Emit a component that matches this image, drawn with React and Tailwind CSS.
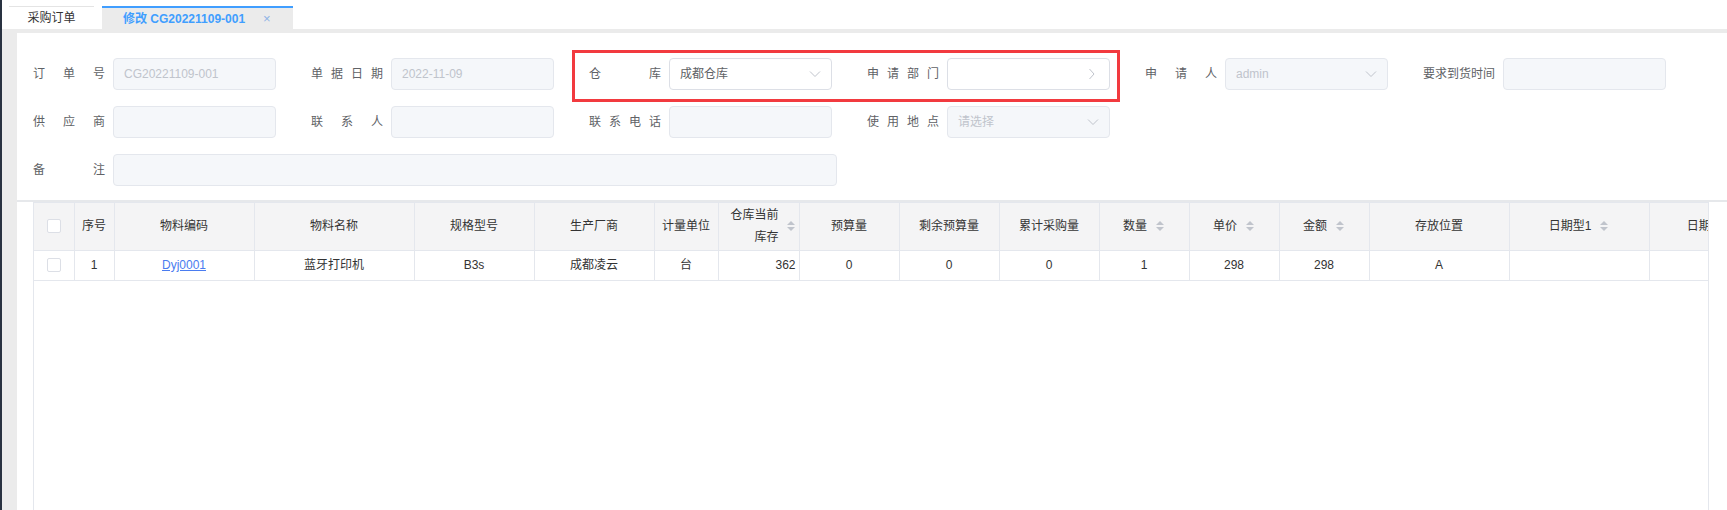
import React from "react";

const FONT = "font-['Liberation_Sans','Noto_Sans_CJK_SC',sans-serif]";

function ChevronDown() {
  return (
    <svg width="12" height="8" viewBox="0 0 12 8" fill="none" stroke="#c0c4cc" strokeWidth="1">
      <polyline points="1,1.5 6,6.5 11,1.5" />
    </svg>
  );
}

function ChevronRight() {
  return (
    <svg width="7" height="12" viewBox="0 0 7 12" fill="none" stroke="#c0c4cc" strokeWidth="1">
      <polyline points="1.5,1 6,6 1.5,11" />
    </svg>
  );
}

function SortCaret() {
  return (
    <svg width="10" height="14" viewBox="0 0 10 14" className="shrink-0">
      <path d="M1 6 L5 2 L9 6 Z" fill="#c0c4cc" />
      <path d="M1 8 L5 12 L9 8 Z" fill="#c0c4cc" />
    </svg>
  );
}

function Label({ text }) {
  return (
    <div className="flex w-[72px] shrink-0 justify-between text-[12px] text-[#606266]">
      {text.split("").map((c, i) => (
        <span key={i}>{c}</span>
      ))}
    </div>
  );
}

function Field({ label, value, placeholder, disabled, icon, wide }) {
  return (
    <div className={`flex items-center gap-[8px] ${wide ? "col-span-3" : ""}`}>
      <Label text={label} />
      <div
        className={`flex h-[32px] shrink-0 items-center justify-between rounded-[4px] border pl-[10px] text-[12px] ${
          wide ? "w-[724px]" : "w-[163px]"
        } ${
          disabled
            ? "border-[#e4e7ed] bg-[#f5f7fa] text-[#c0c4cc]"
            : "border-[#dcdfe6] bg-white text-[#606266]"
        } ${icon === "right" ? "pr-[14px]" : "pr-[10px]"}`}
      >
        <span className={placeholder ? "text-[#c0c4cc]" : ""}>{value || placeholder}</span>
        {icon === "down" && <ChevronDown />}
        {icon === "right" && <ChevronRight />}
      </div>
    </div>
  );
}

const columns = [
  { key: "check", title: "", w: "w-[40px]" },
  { key: "idx", title: "序号", w: "w-[40px]" },
  { key: "code", title: "物料编码", w: "w-[140px]" },
  { key: "name", title: "物料名称", w: "w-[160px]" },
  { key: "spec", title: "规格型号", w: "w-[120px]" },
  { key: "maker", title: "生产厂商", w: "w-[120px]" },
  { key: "unit", title: "计量单位", w: "w-[64px]" },
  { key: "stock", title: "仓库当前库存", w: "w-[81px]", sort: true, right: true },
  { key: "budget", title: "预算量", w: "w-[100px]" },
  { key: "left", title: "剩余预算量", w: "w-[100px]" },
  { key: "total", title: "累计采购量", w: "w-[100px]" },
  { key: "qty", title: "数量", w: "w-[90px]", sort: true },
  { key: "price", title: "单价", w: "w-[90px]", sort: true },
  { key: "amount", title: "金额", w: "w-[90px]", sort: true },
  { key: "place", title: "存放位置", w: "w-[140px]" },
  { key: "date1", title: "日期型1", w: "w-[140px]", sort: true },
  { key: "date2", title: "日期型2", w: "w-[136px]", sort: true },
];

const row = {
  idx: "1",
  code: "Dyj0001",
  name: "蓝牙打印机",
  spec: "B3s",
  maker: "成都凌云",
  unit: "台",
  stock: "362",
  budget: "0",
  left: "0",
  total: "0",
  qty: "1",
  price: "298",
  amount: "298",
  place: "A",
  date1: "",
  date2: "",
};

function Checkbox() {
  return <div className="mx-auto h-[14px] w-[14px] rounded-[2px] border border-[#dcdfe6] bg-white" />;
}

export default function App() {
  return (
    <div className={`flex h-[510px] w-[1727px] overflow-hidden bg-white ${FONT}`}>
      <div className="w-[2px] shrink-0 bg-[#293241]" />
      <div className="flex flex-1 flex-col">
        {/* tabs */}
        <div className="flex h-[29px] items-end gap-[8px] pl-[7px]">
          <div className="flex h-[23px] w-[85px] items-center justify-center border-t border-[#e4e4e4] bg-white text-[12px] text-[#333]">
            采购订单
          </div>
          <div className="flex h-[23px] w-[191px] items-center gap-[18px] border-t-2 border-[#409eff] bg-[#ebebeb] pl-[21px] text-[12px] font-bold text-[#409eff]">
            <span>修改 CG20221109-001</span>
            <span className="text-[13px] font-normal text-[#8fb3e6]">×</span>
          </div>
        </div>
        <div className="h-[4px] bg-[#ebebeb]" />

        <div className="flex flex-1">
          <div className="w-[15px] shrink-0 bg-[#ebebeb]" />
          <div className="flex flex-1 flex-col">
            {/* form */}
            <div className="relative h-[167px] pl-[16px] pt-[25px]">
              <div className="grid grid-cols-[repeat(6,243px)] gap-x-[35px] gap-y-[16px]">
                <Field label="订单号" value="CG20221109-001" disabled />
                <Field label="单据日期" value="2022-11-09" disabled />
                <Field label="仓库" value="成都仓库" icon="down" />
                <Field label="申请部门" icon="right" />
                <Field label="申请人" value="admin" disabled icon="down" />
                <Field label="要求到货时间" disabled />
                <Field label="供应商" disabled />
                <Field label="联系人" disabled />
                <Field label="联系电话" disabled />
                <Field label="使用地点" placeholder="请选择" disabled icon="down" />
                <div className="col-span-2" />
                <Field label="备注" disabled wide />
              </div>
              <div className="absolute left-[555px] top-[17px] h-[52px] w-[548px] border-[3px] border-[#f23a3f]" />
            </div>
            <div className="h-[2px] bg-[#e6e8eb]" />

            {/* table */}
            <div className="ml-[16px] flex w-[1676px] flex-1 flex-col overflow-hidden border-x border-t border-[#e4e7ed]">
              <table className="w-[1751px] table-fixed border-collapse text-[12px] text-[#333]">
                <colgroup>
                  {columns.map((c) => (
                    <col key={c.key} className={c.w} />
                  ))}
                </colgroup>
                <thead>
                  <tr className="h-[47px] bg-[#f4f4f5]">
                    {columns.map((c) => (
                      <th key={c.key} className="border-b border-r border-[#e4e7ed] p-0 font-normal">
                        {c.key === "check" ? (
                          <Checkbox />
                        ) : c.right ? (
                          <div className="flex items-center justify-end pr-[3px]">
                            <span className="w-[48px] text-right leading-[22px]">{c.title}</span>
                            <span className="ml-[7px]">
                              <SortCaret />
                            </span>
                          </div>
                        ) : (
                          <div className="flex items-center justify-center gap-[8px] whitespace-nowrap">
                            <span>{c.title}</span>
                            {c.sort && <SortCaret />}
                          </div>
                        )}
                      </th>
                    ))}
                  </tr>
                </thead>
                <tbody>
                  <tr className="h-[30px]">
                    {columns.map((c) => (
                      <td
                        key={c.key}
                        className={`border-b border-r border-[#e4e7ed] p-0 ${
                          c.right ? "pr-[3px] text-right" : "text-center"
                        }`}
                      >
                        {c.key === "check" ? (
                          <Checkbox />
                        ) : c.key === "code" ? (
                          <span className="text-[#4a7cf0] underline">{row.code}</span>
                        ) : (
                          row[c.key]
                        )}
                      </td>
                    ))}
                  </tr>
                </tbody>
              </table>
            </div>
          </div>
        </div>
      </div>
    </div>
  );
}
